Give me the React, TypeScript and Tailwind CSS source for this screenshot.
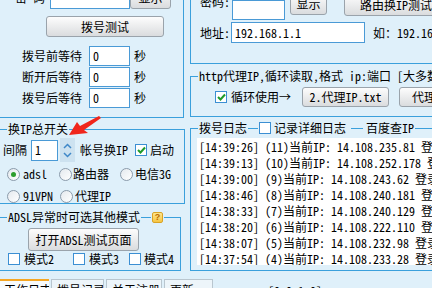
import React from "react";

const Btn = ({ children, className = "" }: { children: React.ReactNode; className?: string }) => (
  <div
    className={
      "flex items-center justify-center shrink-0 border border-[#9aa3ab] rounded-[3px] bg-linear-to-b from-[#fdfdfd] to-[#dadcde] whitespace-nowrap overflow-hidden " +
      className
    }
  >
    {children}
  </div>
);

const Check = ({ checked = false, className = "" }: { checked?: boolean; className?: string }) => (
  <div className={"w-[12px] h-[12px] shrink-0 border border-[#3b8fd3] bg-white flex items-center justify-center " + className}>
    {checked && (
      <svg width="9" height="8" viewBox="0 0 9 8">
        <path d="M1 4 L3.5 6.5 L8 1.5" stroke="#1f9a2a" strokeWidth="2" fill="none" />
      </svg>
    )}
  </div>
);

const Radio = ({ checked = false, className = "" }: { checked?: boolean; className?: string }) => (
  <div
    className={
      "w-[13px] h-[13px] shrink-0 rounded-full border border-[#8b9bab] bg-linear-to-br from-[#e4e9ee] to-white flex items-center justify-center " +
      className
    }
  >
    {checked && <div className="w-[5px] h-[5px] rounded-full bg-[#2e9e2e]" />}
  </div>
);

const Input = ({ children, className = "" }: { children?: React.ReactNode; className?: string }) => (
  <div className={"shrink-0 border border-[#4a9ad6] bg-white flex items-center pl-[3px] overflow-hidden whitespace-nowrap " + className}>
    {children}
  </div>
);

const HLine = ({ className = "" }: { className?: string }) => <div className={"h-px bg-[#3aa0dc] shrink-0 " + className} />;

const logs = [
  ["14:39:26", "11", "14.108.235.81"],
  ["14:39:13", "10", "14.108.252.178"],
  ["14:39:00", "9", "14.108.243.62"],
  ["14:38:46", "8", "14.108.240.181"],
  ["14:38:33", "7", "14.108.240.129"],
  ["14:38:20", "6", "14.108.222.110"],
  ["14:38:07", "5", "14.108.232.98"],
  ["14:37:54", "4", "14.108.233.28"],
];

export default function App() {
  return (
    <div className="relative w-[432px] h-[288px] overflow-hidden bg-[#dff0fa] text-[12px] leading-[14px] text-black font-['Noto_Sans_Mono_CJK_SC','Noto_Sans_CJK_SC','Liberation_Mono',monospace]">
      <div className="flex h-[279px]">
        {/* LEFT COLUMN */}
        <div className="w-[190px] shrink-0 flex flex-col">
          <div className="h-[118px] w-[184px] border-r border-b border-[#3aa0dc] flex flex-col">
            <div className="flex items-center -mt-[13px] h-[22px]">
              <span className="ml-[15px]">密</span>
              <span className="ml-[6px]">码</span>
              <Input className="ml-[5px] w-[80px] h-[21px] text-[8px] tracking-[1px]">
                <span className="-mt-[6px]">●●●●●●●●●●●</span>
              </Input>
              <Btn className="w-[41px] h-[22px]">显示</Btn>
            </div>
            <Btn className="mt-[7px] ml-[46px] w-[118px] h-[21px]">拨号测试</Btn>
            <div className="mt-[9px] flex flex-col gap-[1px]">
              {["拨号前等待", "断开后等待", "拨号后等待"].map((t) => (
                <div key={t} className="flex items-center h-[20px]">
                  <span className="w-[82px] text-right">{t}</span>
                  <Input className="ml-[7px] w-[41px] h-[20px]">0</Input>
                  <span className="ml-[4px]">秒</span>
                </div>
              ))}
            </div>
          </div>

          <fieldset className="mt-[4px] -ml-[4px] w-[189px] h-[82px] border border-[#3aa0dc]">
            <legend className="ml-[10px] px-[1px] leading-[14px]">换IP总开关</legend>
            <div className="mt-[2px] flex items-center h-[24px]">
              <span className="ml-[6px]">间隔</span>
              <Input className="ml-[4px] w-[27px] h-[21px]">1</Input>
              <div className="ml-[2px] w-[15px] h-[24px] bg-[#cde2f0] flex flex-col items-center justify-center gap-[3px]">
                <svg width="9" height="6" viewBox="0 0 9 6">
                  <path d="M1 5 L4.5 1.5 L8 5" stroke="#3f88c8" strokeWidth="1.5" fill="none" />
                </svg>
                <svg width="9" height="6" viewBox="0 0 9 6">
                  <path d="M1 1 L4.5 4.5 L8 1" stroke="#3f88c8" strokeWidth="1.5" fill="none" />
                </svg>
              </div>
              <span className="ml-[5px]">帐号换IP</span>
              <Check checked className="ml-[7px]" />
              <span className="ml-[3px]">启动</span>
            </div>
            <div className="mt-[4px] flex items-center h-[16px]">
              <Radio checked className="ml-[10px]" />
              <span className="ml-[3px]">adsl</span>
              <Radio className="ml-[12px]" />
              <span className="ml-[1px]">路由器</span>
              <Radio className="ml-[11px]" />
              <span className="ml-[2px]">电信3G</span>
            </div>
            <div className="mt-[6px] flex items-center h-[16px]">
              <Radio className="ml-[10px]" />
              <span className="ml-[3px]">91VPN</span>
              <Radio className="ml-[7px]" />
              <span className="ml-[2px]">代理IP</span>
            </div>
          </fieldset>

          <fieldset className="mt-[6px] -ml-[4px] w-[185px] h-[61px] border border-[#3aa0dc]">
            <legend className="ml-[10px] px-[1px] leading-[14px]">
              <div className="flex items-center">
                <span>ADSL异常时可选其他模式</span>
                <HLine className="ml-[1px] w-[10px]" />
                <span className="ml-[1px] w-[11px] h-[11px] rounded-[2px] border border-[#d9a326] bg-linear-to-b from-[#fde58a] to-[#f5c542] text-[#b86a00] text-[9px] leading-[9px] font-bold flex items-center justify-center font-['Liberation_Sans',sans-serif]">
                  ?
                </span>
              </div>
            </legend>
            <Btn className="mt-[4px] ml-[31px] w-[111px] h-[23px]">打开ADSL测试页面</Btn>
            <div className="mt-[2px] flex items-center h-[12px]">
              <Check className="ml-[11px]" />
              <span className="ml-[4px]">模式2</span>
              <Check className="ml-[19px]" />
              <span className="ml-[4px]">模式3</span>
              <Check className="ml-[10px]" />
              <span className="ml-[3px]">模式4</span>
            </div>
          </fieldset>
        </div>

        {/* RIGHT COLUMN */}
        <div className="w-[320px] shrink-0 flex flex-col">
          <div className="h-[64px] border-l border-b border-[#3aa0dc] flex flex-col">
            <div className="flex items-start h-[20px]">
              <span className="ml-[9px] -mt-[5px]">密码:</span>
              <Input className="ml-[2px] w-[53px] h-[20px]" />
              <Btn className="ml-[5px] -mt-[7px] w-[37px] h-[22px]">显示</Btn>
              <Btn className="ml-[17px] -mt-[6px] w-[110px] h-[22px] justify-start pl-[15px]">路由换IP测试</Btn>
            </div>
            <div className="mt-[2px] flex items-center h-[21px]">
              <span className="ml-[9px]">地址:</span>
              <Input className="ml-[1px] w-[134px] h-[21px]">192.168.1.1</Input>
              <span className="ml-[8px] whitespace-nowrap">如：192.168.1.1</span>
            </div>
          </div>

          <fieldset className="mt-[5px] h-[48px] border border-r-0 border-[#3aa0dc]">
            <legend className="ml-[7px] px-[1px] leading-[14px] whitespace-nowrap">http代理IP,循环读取,格式 ip:端口 [大多数代理</legend>
            <div className="mt-[4px] flex items-center h-[20px]">
              <Check checked className="ml-[24px]" />
              <span className="ml-[4px]">循环使用→</span>
              <Btn className="ml-[11px] w-[87px] h-[20px]">2.代理IP.txt</Btn>
              <Btn className="ml-[10px] w-[80px] h-[20px] justify-start pl-[12px]">代理IP测试</Btn>
            </div>
          </fieldset>

          <fieldset className="mt-[4px] h-[150px] border border-r-0 border-[#3aa0dc]">
            <legend className="ml-[7px] px-[1px] leading-[14px]">
              <div className="flex items-center whitespace-nowrap">
                <span>拨号日志</span>
                <HLine className="ml-[1px] w-[10px]" />
                <Check className="ml-[1px]" />
                <span className="ml-[3px]">记录详细日志</span>
                <HLine className="ml-[5px] w-[12px]" />
                <span className="ml-[3px]">百度查IP</span>
              </div>
            </legend>
            <div className="mt-[3px] ml-[6px] h-[127px] bg-white pt-[1px] pl-[2px] leading-[16px] overflow-hidden">
              {logs.map(([t, n, ip]) => (
                <div key={t} className="whitespace-nowrap">
                  [{t}] ({n})当前IP: {ip} 登录成功
                </div>
              ))}
            </div>
          </fieldset>
        </div>
      </div>

      {/* Bottom tabs */}
      <div className="flex items-start h-[9px]">
        <div className="w-[49px] h-[12px] border-t-2 border-[#f5a623] bg-[#f7fbfd] pl-[4px] pt-[2px] whitespace-nowrap overflow-hidden">工作日志</div>
        <div className="ml-[2px] w-[53px] h-[12px] border border-[#b9c6cf] bg-[#edf5fa] pl-[5px] pt-[3px] whitespace-nowrap overflow-hidden">拨号记录</div>
        <div className="ml-[2px] w-[56px] h-[12px] border border-[#b9c6cf] bg-[#edf5fa] pl-[5px] pt-[3px] whitespace-nowrap overflow-hidden">关于注册</div>
        <div className="ml-[2px] w-[49px] h-[12px] border border-[#b9c6cf] bg-[#edf5fa] pl-[5px] pt-[3px] whitespace-nowrap overflow-hidden">更新</div>
        <span className="ml-[55px] mt-[5px] whitespace-nowrap">[0.0.1.0]</span>
      </div>

      {/* red annotation arrow */}
      <svg className="absolute left-0 top-0 pointer-events-none" width="432" height="288">
        <polygon points="69,135 77,122 80,126 99,116 101,118 84,130 88,133" fill="#f0261c" />
      </svg>
    </div>
  );
}
